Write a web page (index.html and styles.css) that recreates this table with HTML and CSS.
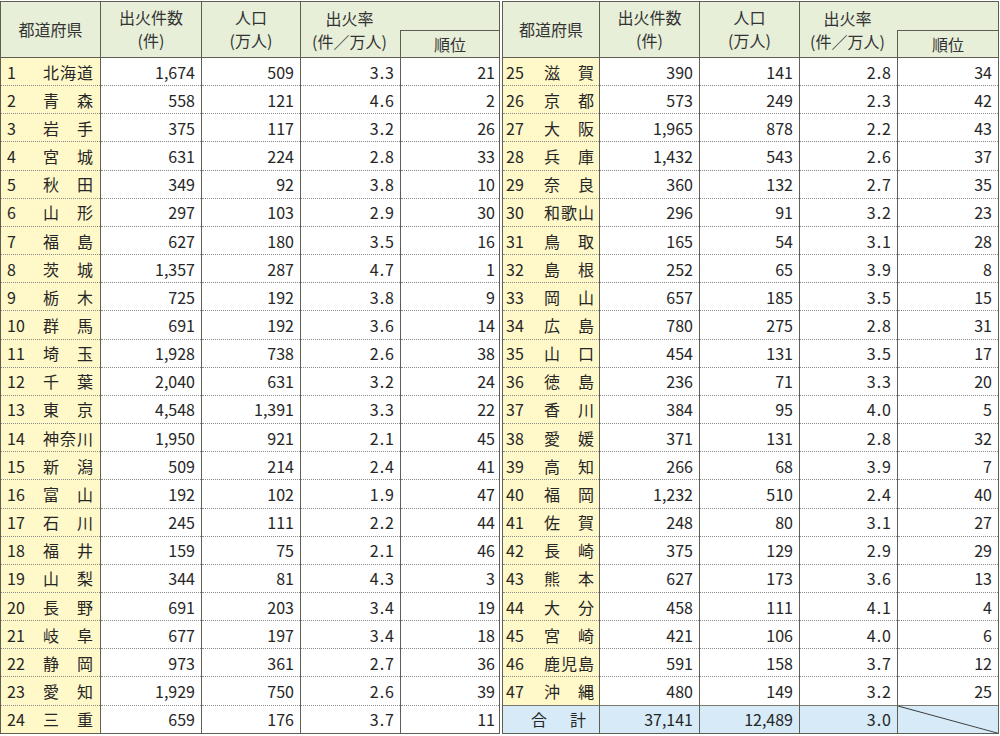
FILE: index.html
```html
<!DOCTYPE html>
<html lang="ja">
<head>
<meta charset="utf-8">
<link rel="stylesheet" href="styles.css">
</head>
<body>
<div class="wrap">
<table class="tbl left">
<colgroup><col class="c1"><col class="c2"><col class="c3"><col class="c4"><col class="c5"></colgroup>
<thead>
<tr class="h1"><th rowspan="2" class="hp">都道府県</th><th rowspan="2" class="h2l">出火件数<br>(件)</th><th rowspan="2" class="h2l">人口<br>(万人)</th><th rowspan="2" class="hr">出火率<br>(件／万人)</th><th class="hb"></th></tr>
<tr class="h2"><th class="hk">順位</th></tr>
</thead>
<tbody>
<tr><td class="p"><span class="n">1</span><span class="nm">北海道</span></td><td>1,674</td><td>509</td><td class="r">3.3</td><td>21</td></tr>
<tr><td class="p"><span class="n">2</span><span class="nm">青森</span></td><td>558</td><td>121</td><td class="r">4.6</td><td>2</td></tr>
<tr><td class="p"><span class="n">3</span><span class="nm">岩手</span></td><td>375</td><td>117</td><td class="r">3.2</td><td>26</td></tr>
<tr><td class="p"><span class="n">4</span><span class="nm">宮城</span></td><td>631</td><td>224</td><td class="r">2.8</td><td>33</td></tr>
<tr><td class="p"><span class="n">5</span><span class="nm">秋田</span></td><td>349</td><td>92</td><td class="r">3.8</td><td>10</td></tr>
<tr><td class="p"><span class="n">6</span><span class="nm">山形</span></td><td>297</td><td>103</td><td class="r">2.9</td><td>30</td></tr>
<tr><td class="p"><span class="n">7</span><span class="nm">福島</span></td><td>627</td><td>180</td><td class="r">3.5</td><td>16</td></tr>
<tr><td class="p"><span class="n">8</span><span class="nm">茨城</span></td><td>1,357</td><td>287</td><td class="r">4.7</td><td>1</td></tr>
<tr><td class="p"><span class="n">9</span><span class="nm">栃木</span></td><td>725</td><td>192</td><td class="r">3.8</td><td>9</td></tr>
<tr><td class="p"><span class="n">10</span><span class="nm">群馬</span></td><td>691</td><td>192</td><td class="r">3.6</td><td>14</td></tr>
<tr><td class="p"><span class="n">11</span><span class="nm">埼玉</span></td><td>1,928</td><td>738</td><td class="r">2.6</td><td>38</td></tr>
<tr><td class="p"><span class="n">12</span><span class="nm">千葉</span></td><td>2,040</td><td>631</td><td class="r">3.2</td><td>24</td></tr>
<tr><td class="p"><span class="n">13</span><span class="nm">東京</span></td><td>4,548</td><td>1,391</td><td class="r">3.3</td><td>22</td></tr>
<tr><td class="p"><span class="n">14</span><span class="nm">神奈川</span></td><td>1,950</td><td>921</td><td class="r">2.1</td><td>45</td></tr>
<tr><td class="p"><span class="n">15</span><span class="nm">新潟</span></td><td>509</td><td>214</td><td class="r">2.4</td><td>41</td></tr>
<tr><td class="p"><span class="n">16</span><span class="nm">富山</span></td><td>192</td><td>102</td><td class="r">1.9</td><td>47</td></tr>
<tr><td class="p"><span class="n">17</span><span class="nm">石川</span></td><td>245</td><td>111</td><td class="r">2.2</td><td>44</td></tr>
<tr><td class="p"><span class="n">18</span><span class="nm">福井</span></td><td>159</td><td>75</td><td class="r">2.1</td><td>46</td></tr>
<tr><td class="p"><span class="n">19</span><span class="nm">山梨</span></td><td>344</td><td>81</td><td class="r">4.3</td><td>3</td></tr>
<tr><td class="p"><span class="n">20</span><span class="nm">長野</span></td><td>691</td><td>203</td><td class="r">3.4</td><td>19</td></tr>
<tr><td class="p"><span class="n">21</span><span class="nm">岐阜</span></td><td>677</td><td>197</td><td class="r">3.4</td><td>18</td></tr>
<tr><td class="p"><span class="n">22</span><span class="nm">静岡</span></td><td>973</td><td>361</td><td class="r">2.7</td><td>36</td></tr>
<tr><td class="p"><span class="n">23</span><span class="nm">愛知</span></td><td>1,929</td><td>750</td><td class="r">2.6</td><td>39</td></tr>
<tr><td class="p"><span class="n">24</span><span class="nm">三重</span></td><td>659</td><td>176</td><td class="r">3.7</td><td>11</td></tr>
</tbody>
</table>
<table class="tbl right">
<colgroup><col class="d1"><col class="d2"><col class="d3"><col class="d4"><col class="d5"></colgroup>
<thead>
<tr class="h1"><th rowspan="2" class="hp">都道府県</th><th rowspan="2" class="h2l">出火件数<br>(件)</th><th rowspan="2" class="h2l">人口<br>(万人)</th><th rowspan="2" class="hr">出火率<br>(件／万人)</th><th class="hb"></th></tr>
<tr class="h2"><th class="hk">順位</th></tr>
</thead>
<tbody>
<tr><td class="p"><span class="n">25</span><span class="nm">滋賀</span></td><td>390</td><td>141</td><td class="r">2.8</td><td>34</td></tr>
<tr><td class="p"><span class="n">26</span><span class="nm">京都</span></td><td>573</td><td>249</td><td class="r">2.3</td><td>42</td></tr>
<tr><td class="p"><span class="n">27</span><span class="nm">大阪</span></td><td>1,965</td><td>878</td><td class="r">2.2</td><td>43</td></tr>
<tr><td class="p"><span class="n">28</span><span class="nm">兵庫</span></td><td>1,432</td><td>543</td><td class="r">2.6</td><td>37</td></tr>
<tr><td class="p"><span class="n">29</span><span class="nm">奈良</span></td><td>360</td><td>132</td><td class="r">2.7</td><td>35</td></tr>
<tr><td class="p"><span class="n">30</span><span class="nm">和歌山</span></td><td>296</td><td>91</td><td class="r">3.2</td><td>23</td></tr>
<tr><td class="p"><span class="n">31</span><span class="nm">鳥取</span></td><td>165</td><td>54</td><td class="r">3.1</td><td>28</td></tr>
<tr><td class="p"><span class="n">32</span><span class="nm">島根</span></td><td>252</td><td>65</td><td class="r">3.9</td><td>8</td></tr>
<tr><td class="p"><span class="n">33</span><span class="nm">岡山</span></td><td>657</td><td>185</td><td class="r">3.5</td><td>15</td></tr>
<tr><td class="p"><span class="n">34</span><span class="nm">広島</span></td><td>780</td><td>275</td><td class="r">2.8</td><td>31</td></tr>
<tr><td class="p"><span class="n">35</span><span class="nm">山口</span></td><td>454</td><td>131</td><td class="r">3.5</td><td>17</td></tr>
<tr><td class="p"><span class="n">36</span><span class="nm">徳島</span></td><td>236</td><td>71</td><td class="r">3.3</td><td>20</td></tr>
<tr><td class="p"><span class="n">37</span><span class="nm">香川</span></td><td>384</td><td>95</td><td class="r">4.0</td><td>5</td></tr>
<tr><td class="p"><span class="n">38</span><span class="nm">愛媛</span></td><td>371</td><td>131</td><td class="r">2.8</td><td>32</td></tr>
<tr><td class="p"><span class="n">39</span><span class="nm">高知</span></td><td>266</td><td>68</td><td class="r">3.9</td><td>7</td></tr>
<tr><td class="p"><span class="n">40</span><span class="nm">福岡</span></td><td>1,232</td><td>510</td><td class="r">2.4</td><td>40</td></tr>
<tr><td class="p"><span class="n">41</span><span class="nm">佐賀</span></td><td>248</td><td>80</td><td class="r">3.1</td><td>27</td></tr>
<tr><td class="p"><span class="n">42</span><span class="nm">長崎</span></td><td>375</td><td>129</td><td class="r">2.9</td><td>29</td></tr>
<tr><td class="p"><span class="n">43</span><span class="nm">熊本</span></td><td>627</td><td>173</td><td class="r">3.6</td><td>13</td></tr>
<tr><td class="p"><span class="n">44</span><span class="nm">大分</span></td><td>458</td><td>111</td><td class="r">4.1</td><td>4</td></tr>
<tr><td class="p"><span class="n">45</span><span class="nm">宮崎</span></td><td>421</td><td>106</td><td class="r">4.0</td><td>6</td></tr>
<tr><td class="p"><span class="n">46</span><span class="nm">鹿児島</span></td><td>591</td><td>158</td><td class="r">3.7</td><td>12</td></tr>
<tr><td class="p"><span class="n">47</span><span class="nm">沖縄</span></td><td>480</td><td>149</td><td class="r">3.2</td><td>25</td></tr>
<tr class="total"><td class="tl"><span class="tn">合計</span></td><td>37,141</td><td>12,489</td><td class="r">3.0</td><td class="diag"><svg class="slash" viewBox="0 0 100 28" preserveAspectRatio="none"><line x1="0" y1="0" x2="100" y2="28" stroke="#3a3a3a" stroke-width="1" vector-effect="non-scaling-stroke"/></svg></td></tr>
</tbody>
</table>
</div>
</body>
</html>
```
FILE: styles.css
```css
html, body {
  margin: 0;
  padding: 0;
  background: #ffffff;
}
body {
  padding-top: 1px;
  font-family: "Noto Sans CJK JP", "Noto Sans", sans-serif;
  color: #262626;
}
.wrap {
  display: flex;
  gap: 2px;
  align-items: flex-start;
}
.tbl {
  border-collapse: collapse;
  table-layout: fixed;
  border: 1px solid #5e5e52;
  font-size: 16px;
}
.left { width: 500px; }
.right { width: 497px; }
.c1 { width: 100px; }
.c2 { width: 101px; }
.c3 { width: 99px; }
.c4 { width: 100px; }
.c5 { width: 99px; }
.d1 { width: 97px; }
.d2 { width: 100px; }
.d3 { width: 100px; }
.d4 { width: 98px; }
.d5 { width: 101px; }

th {
  background: #e7efd9;
  font-weight: normal;
  color: #333;
  border: 1px solid #5e5e52;
  padding: 0;
  text-align: center;
  vertical-align: middle;
  font-size: 16px;
}
.h1 { height: 29px; }
.h2 { height: 27px; }
.h2l { line-height: 23px; padding-bottom: 1px; }
.hp { line-height: 20px; padding-bottom: 2px; }
.hr {
  line-height: 23px;
  border-right: none;
  padding-right: 2px;
}
.hb {
  border-left: none;
  border-bottom: 1px solid #5e5e52;
}
.hk {
  border-left: 1px solid #5e5e52;
  line-height: 20px;
  padding-bottom: 1px;
}

tbody tr { height: 28.17px; }
td {
  border-left: 1px solid #5e5e52;
  border-right: 1px solid #5e5e52;
  border-bottom: 1px dotted #8a8a8a;
  padding: 0 6px 0 0;
  text-align: right;
  vertical-align: middle;
  line-height: 20px;
  white-space: nowrap;
}
tbody tr:last-child td { border-bottom: 1px solid #5e5e52; }
.left td:last-child { padding-right: 4px; }
.r { letter-spacing: 1px; padding-right: 5px; }

td.p {
  background: #fff8c9;
  text-align: left;
  padding: 0 6px 0 6px;
}
.right td.p { padding-left: 3px; }
.n {
  display: inline-block;
  width: 36px;
}
.right .n { width: 38px; }
.nm {
  display: inline-block;
  width: 50px;
  text-align: justify;
  text-align-last: justify;
  vertical-align: top;
}

.total td {
  background: #d6ebf7;
  border-top: 1px solid #7a7a70;
}
td.tl {
  text-align: left;
  padding-left: 28px;
}
.tn {
  display: inline-block;
  width: 55px;
  text-align-last: justify;
}
td.diag {
  position: relative;
  padding: 0;
}
.slash {
  position: absolute;
  left: 0;
  top: 0;
  width: 100%;
  height: 100%;
  display: block;
}
```
